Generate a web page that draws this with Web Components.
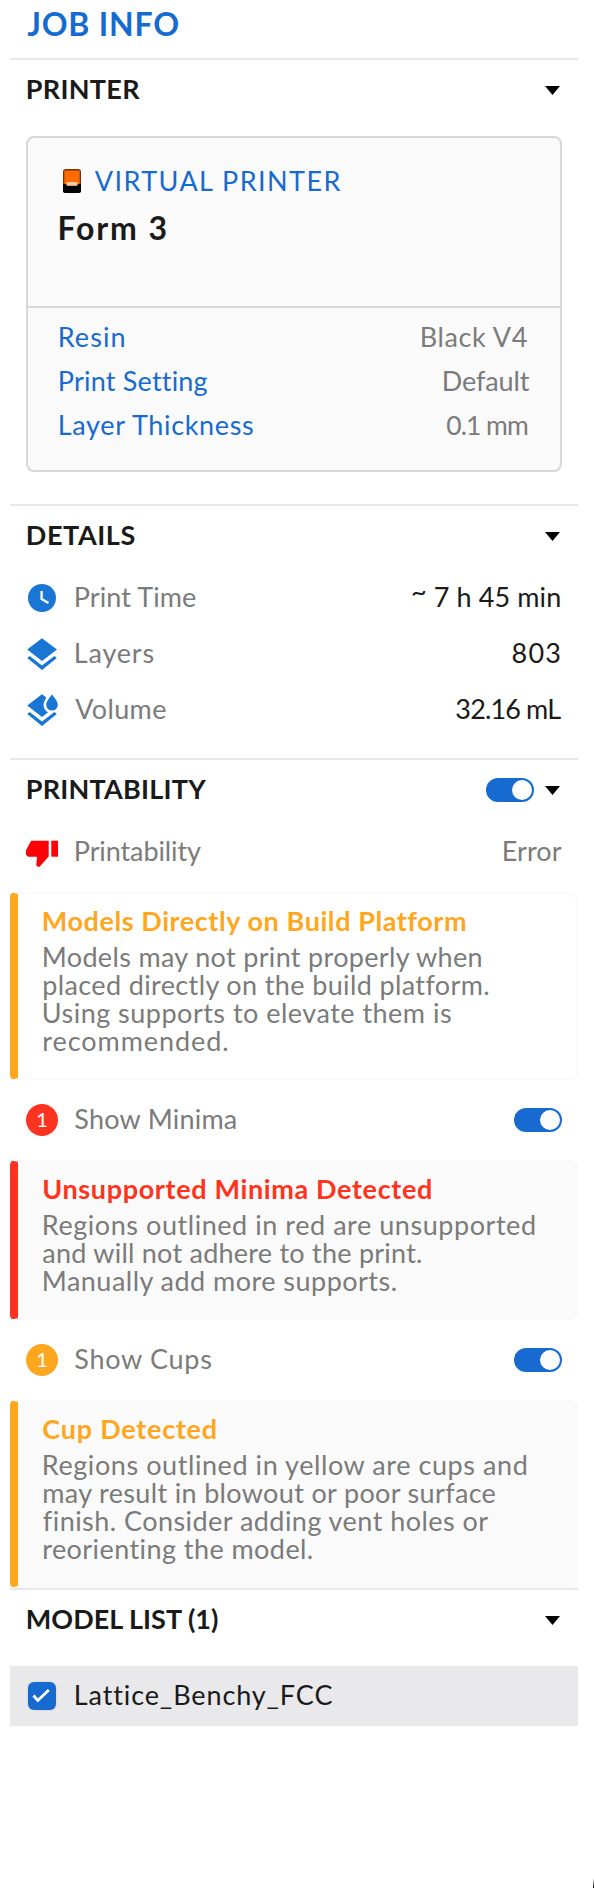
<!DOCTYPE html>
<html lang="en">
<head>
<meta charset="utf-8">
<title>Job Info</title>
<style>
html,body{margin:0;background:#fff}
body{font-family:Lato,"Liberation Sans",sans-serif;color:#1a1a1a;height:1888px;overflow:hidden}
</style>
</head>
<body>
<job-panel></job-panel>
<script>
const define = (name, html, ready) => {
  const tpl = document.createElement('template');
  tpl.innerHTML = html;
  customElements.define(name, class extends HTMLElement {
    constructor() {
      super();
      this.attachShadow({mode: 'open'}).appendChild(tpl.content.cloneNode(true));
    }
    connectedCallback() { if (ready) ready(this, this.shadowRoot); }
  });
};

/* One line of text, tracked so that its ink spans the given width. */
const ctx = document.createElement('canvas').getContext('2d');
define('fit-text', `<style>
  :host{display:flex;height:28px;white-space:pre;flex:none;font-variant-ligatures:none}
  span{display:block;flex:none;margin-top:1px}
  b{font-weight:inherit;vertical-align:6px;line-height:0}
</style><span></span>`, (el, root) => {
  const span = root.querySelector('span');
  const text = el.getAttribute('text');
  const size = +(el.getAttribute('size') || 27);
  const weight = el.getAttribute('weight') || 400;
  const w = +el.getAttribute('w');
  ctx.font = `${weight} ${size * 10}px Lato`;
  const m = ctx.measureText(text);
  const left = m.actualBoundingBoxLeft / 10;
  const ink = left + m.actualBoundingBoxRight / 10;
  if (text[0] === '~') {
    const mark = document.createElement('b');
    mark.textContent = '~';
    span.replaceChildren(mark, text.slice(1));
  } else span.textContent = text;
  span.style.font = `${weight} ${size}px/28px Lato,"Liberation Sans",sans-serif`;
  span.style.letterSpacing = text.length > 1 ? ((w - 0.5 - ink) / (text.length - 1)).toFixed(3) + 'px' : 0;
  span.style.marginLeft = left + (left < -1.4 ? 0.9 : 0.2) + 'px';
  el.style.width = w + 'px';
});

define('caret-icon', `<style>:host{display:block;width:15px;height:9px}svg{display:block}</style>
<svg width="15" height="9"><path d="M0 0H15L7.500 9Z"/></svg>`);

define('toggle-switch', `<style>
  :host{display:flex;box-sizing:border-box;width:48px;height:24px;border-radius:12px;background:#176bd0;justify-content:flex-end;padding:2px}
  i{width:20px;height:20px;border-radius:50%;background:#fff}
</style><i></i>`);

define('count-badge', `<style>
  :host{display:flex;width:32px;height:32px;border-radius:50%;background:var(--tone);color:#fff;font-size:20px;line-height:30px;justify-content:center}
</style><slot></slot>`);

const icons = {
  clock: `<circle cx="16" cy="16" r="14" fill="#1976d5"/><path d="M15.600 9V17L22.500 21" fill="none" stroke="#fff" stroke-width="2.300"/>`,
  layers: `<g fill="#1976d5"><path d="M16 0.300L31 11.500L16 23L1.200 11.500Z"/><path d="M1.200 20L3.600 18.100L16 27.600L28.400 18.100L30.800 20L16 32Z"/></g>`,
  volume: `<g fill="#1976d5"><path d="M16 0.300L31 11.500L16 23L1.200 11.500Z"/>
    <path d="M26 0C28.500 4 32 7.500 32 11A6 6 0 0 1 20 11C20 7.500 23.500 4 26 0Z" stroke="#fff" stroke-width="5"/>
    <path d="M20 -1H32V5H20Z" fill="#fff"/>
    <path d="M26 0.300C28.500 4 31.800 7.500 31.800 10.800A5.800 5.800 0 0 1 20.200 10.800C20.200 7.500 23.500 4 26 0.300Z"/>
    <path d="M1.200 20L3.600 18.100L16 27.600L28.400 18.100L30.800 20L16 32Z"/></g>`,
  thumb: `<g fill="#ff0008"><path d="M6.500 4.700H22.700V20.400L14 30.300Q13 31.500 11.600 30.600L10.300 29.500L11 20.700H2.200L0 18.800V14.500L4.300 6Q5 4.700 6.500 4.700Z"/><path d="M25.300 4.700H32V20.700H25.300Z"/></g>`,
  check: `<rect x="1" y="1" width="30" height="30" rx="7" fill="#dcdcde"/><rect x="2" y="2" width="28" height="28" rx="6" fill="#176bd0"/><path d="M7.500 15.500L11.800 20.500L22.800 10" fill="none" stroke="#fff" stroke-width="2.800"/>`
};
define('row-icon', `<style>:host{display:block;width:32px;height:32px}svg{display:block;overflow:visible}</style><svg width="32" height="32" viewBox="0 0 32 32"></svg>`,
  (el, root) => { root.querySelector('svg').innerHTML = icons[el.getAttribute('name')]; });

define('printer-icon', `<style>:host{display:block;width:18px;height:24px}svg{display:block}</style>
<svg width="18" height="24"><rect width="18" height="24" rx="3" fill="#6a3514"/><rect x="1.300" y="1.500" width="15.400" height="15" rx="1" fill="#ff6a00"/><path d="M0 15H3.500V16.500H14.500V15H18V21.500Q18 24 15.500 24H2.500Q0 24 0 21.500Z" fill="#000"/><rect x="3.500" y="13" width="11" height="3.700" rx="1.300" fill="#ffc9a0"/></svg>`);

define('section-header', `<style>
  :host{display:flex;box-sizing:border-box;width:568px;height:58px;border-top:2px solid #e8e8e9;padding:0 18px 0 17px;justify-content:space-between;align-items:center}
  div{display:flex;align-items:center;gap:11px}
  caret-icon{margin-top:5px}
  ::slotted(toggle-switch){margin-top:4px}
</style><slot></slot><div><slot name="control"></slot><caret-icon></caret-icon></div>`);

define('info-row', `<style>
  :host{display:flex;box-sizing:border-box;width:568px;height:56px;padding:0 16px;align-items:center;color:#7b7b7b}
  .text{display:flex;flex:1;justify-content:space-between;margin:0 0 4px 17px}
  slot[name=value]{color:#1a1a1a}
</style><slot name="icon"></slot><div class="text"><slot></slot><slot name="value"></slot></div><slot name="control"></slot>`);

define('alert-box', `<style>
  :host{display:block;box-sizing:border-box;width:568px;margin:12px 0;padding:12px 20px 24px 25px;border:2px solid #fafafa;border-left:8px solid var(--tone);border-radius:5px 8px 8px 5px;background:#fafafa;color:#7b7b7b}
  :host([plain]){background:#fff}
  .title{color:var(--tone);margin-bottom:8px}
</style><div class="title"><slot name="title"></slot></div><slot></slot>`);

define('setting-row', `<style>
  :host{display:flex;height:44px;align-items:center;justify-content:space-between;color:#7b7b7b}
  slot[name=label]::slotted(*){color:#176bd0}
</style><slot name="label"></slot><slot></slot>`);

define('printer-card', `<style>
  :host{display:block;box-sizing:border-box;width:536px;height:336px;margin:20px 16px 32px;border:2px solid #d8d8d8;border-radius:8px;background:#fafafa}
  .top{box-sizing:border-box;height:170px;padding:28px 31px 0;border-bottom:2px solid #d8d8d8}
  .kind{display:flex;gap:13.500px;align-items:center;color:#176bd0;height:28px;padding-left:4px}
  printer-icon{margin-top:2px}
  .name{margin-top:19px}
  .rows{padding:6px 31px 0}
</style>
<div class="top"><div class="kind"><printer-icon></printer-icon><fit-text text="VIRTUAL PRINTER" w="247"></fit-text></div>
<div class="name"><fit-text text="Form 3" w="106.500" size="32" weight="700"></fit-text></div></div>
<div class="rows"><slot></slot></div>`);

define('model-row', `<style>
  :host{display:flex;box-sizing:border-box;width:568px;height:60px;margin-top:20px;padding:0 16px;align-items:center;background:#e9e9eb}
  slot:not([name])::slotted(*){margin:0 0 4px 17px}
</style><row-icon name="check"></row-icon><slot></slot>`);

define('job-panel', `<style>
  :host{display:block;position:relative;height:1888px;box-sizing:border-box;padding-left:10px}
  .title{display:flex;align-items:center;height:46px;padding:0 17px 12px;color:#176bd0}
  .details{padding:8px 0 20px}
  .status{margin-top:8px}
  alert-box:last-of-type{margin-bottom:0}
  .edge{position:absolute;right:0;bottom:0;width:1px;height:10px;background:linear-gradient(#fff,#000)}
  .amber{--tone:#ffa71f}
  .red{--tone:#ff3420}
</style>
<div class="title"><fit-text text="JOB INFO" w="151.500" size="32" weight="700"></fit-text></div>
<section-header><fit-text text="PRINTER" w="112.500" weight="700"></fit-text></section-header>
<printer-card>
  <setting-row><fit-text slot="label" text="Resin" w="64.500"></fit-text><fit-text text="Black V4" w="106.500" style="margin-right:1.500px"></fit-text></setting-row>
  <setting-row><fit-text slot="label" text="Print Setting" w="147"></fit-text><fit-text text="Default" w="86"></fit-text></setting-row>
  <setting-row><fit-text slot="label" text="Layer Thickness" w="195"></fit-text><fit-text text="0.1 mm" w="81" size="26.500" style="margin-right:1.500px"></fit-text></setting-row>
</printer-card>
<section-header><fit-text text="DETAILS" w="107" weight="700"></fit-text></section-header>
<div class="details">
  <info-row><row-icon slot="icon" name="clock"></row-icon><fit-text text="Print Time" w="121"></fit-text><fit-text slot="value" text="~ 7 h 45 min" w="148" style="margin-right:2px"></fit-text></info-row>
  <info-row><row-icon slot="icon" name="layers"></row-icon><fit-text text="Layers" w="78"></fit-text><fit-text slot="value" text="803" w="47.500" style="margin-right:2px"></fit-text></info-row>
  <info-row><row-icon slot="icon" name="volume"></row-icon><fit-text text="Volume" w="91"></fit-text><fit-text slot="value" text="32.16 mL" w="105" style="margin-right:1px"></fit-text></info-row>
</div>
<section-header><fit-text text="PRINTABILITY" w="178.500" weight="700"></fit-text><toggle-switch slot="control"></toggle-switch></section-header>
<info-row class="status"><row-icon slot="icon" name="thumb"></row-icon><fit-text text="Printability" w="125.500"></fit-text><fit-text slot="value" text="Error" w="58" style="margin-right:1px;color:#7b7b7b"></fit-text></info-row>
<alert-box class="amber" plain>
  <fit-text slot="title" text="Models Directly on Build Platform" w="422" weight="700"></fit-text>
  <fit-text text="Models may not print properly when" w="439.500"></fit-text>
  <fit-text text="placed directly on the build platform." w="445"></fit-text>
  <fit-text text="Using supports to elevate them is" w="407.500"></fit-text>
  <fit-text text="recommended." w="184"></fit-text>
</alert-box>
<info-row><count-badge slot="icon" class="red">1</count-badge><fit-text text="Show Minima" w="161.500"></fit-text><toggle-switch slot="control"></toggle-switch></info-row>
<alert-box class="red">
  <fit-text slot="title" text="Unsupported Minima Detected" w="387.500" weight="700"></fit-text>
  <fit-text text="Regions outlined in red are unsupported" w="491"></fit-text>
  <fit-text text="and will not adhere to the print." w="379"></fit-text>
  <fit-text text="Manually add more supports." w="353"></fit-text>
</alert-box>
<info-row><count-badge slot="icon" class="amber">1</count-badge><fit-text text="Show Cups" w="137"></fit-text><toggle-switch slot="control"></toggle-switch></info-row>
<alert-box class="amber">
  <fit-text slot="title" text="Cup Detected" w="173" weight="700"></fit-text>
  <fit-text text="Regions outlined in yellow are cups and" w="484"></fit-text>
  <fit-text text="may result in blowout or poor surface" w="453.500"></fit-text>
  <fit-text text="finish. Consider adding vent holes or" w="446"></fit-text>
  <fit-text text="reorienting the model." w="269"></fit-text>
</alert-box>
<section-header><fit-text text="MODEL LIST (1)" w="192" weight="700"></fit-text></section-header>
<model-row><fit-text text="Lattice_Benchy_FCC" w="256"></fit-text></model-row>
<div class="edge"></div>`);
</script>
</body>
</html>
